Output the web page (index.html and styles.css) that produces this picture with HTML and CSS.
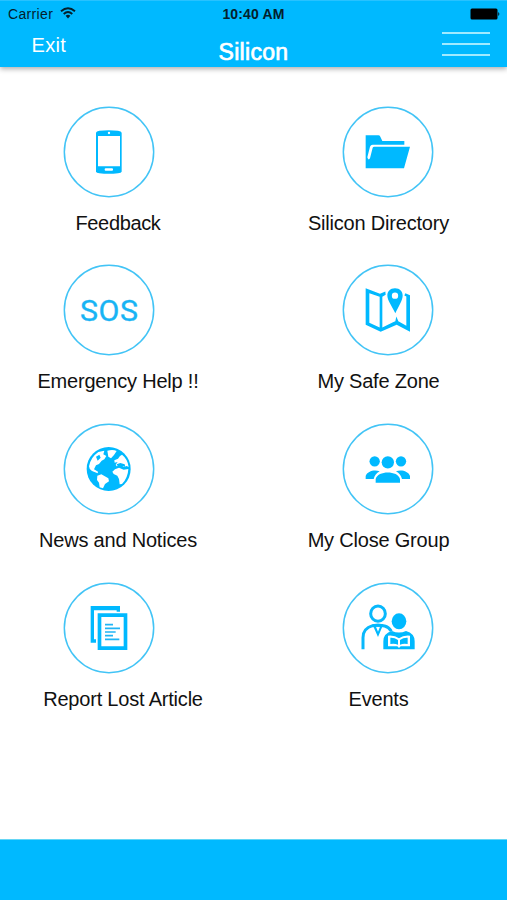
FILE: index.html
```html
<!DOCTYPE html>
<html lang="en">
<head>
<meta charset="utf-8">
<title>Silicon</title>
<link rel="stylesheet" href="styles.css">
</head>
<body>
<div class="app">
  <header class="header">
    <div class="status">
      <div class="carrier"><span>Carrier</span>
        <svg class="wifi" viewBox="0 0 16 12" fill="none" stroke="#04202c" stroke-width="1.9"><path d="M1 4.3Q8-1.8 15 4.3M3.7 7Q8 3.2 12.3 7"/><path d="M5.6 8.7Q8 6.8 10.4 8.7L8 11.4z" fill="#04202c" stroke="none"/></svg>
      </div>
      <div class="time">10:40 AM</div>
      <svg class="battery" viewBox="0 0 31 12"><rect x="0.5" y="0.5" width="27" height="11" rx="1.5"/><path d="M28.3 4q2 2 0 4z"/></svg>
    </div>
    <nav class="nav">
      <span class="exit">Exit</span>
      <h1 class="title">Silicon</h1>
      <div class="menu"><i></i><i></i><i></i></div>
    </nav>
  </header>
  <main class="grid">
    <div class="tile">
      <svg class="icon" viewBox="13 17 276 276"><circle class="ring" cx="151" cy="155" r="134"/>
        <path fill-rule="evenodd" d="M112 97Q113 93 122 91Q150 88 178 91Q188 93 189 97V214Q188 218 178 219Q150 222 122 219Q113 218 112 214zM118 107V198H184V107z"/><rect class="paper" x="138" y="204" width="25" height="7" rx="3"/><circle class="paper" cx="151" cy="98" r="3.5"/></svg>
      <span class="label feedback">Feedback</span>
    </div>
    <div class="tile">
      <svg class="icon" viewBox="13 17 276 276"><circle class="ring" cx="151" cy="155" r="134"/>
        <path d="M84 105H122Q126 105 128 109L134 122H200V133H105Q99 133 97 139L89 171Q92 182 97 174L105 142Q106 139 110 139H217L199 204H84z"/></svg>
      <span class="label directory">Silicon Directory</span>
    </div>
    <div class="tile">
      <svg class="icon" viewBox="13 13.5 276 276"><circle class="ring" cx="151" cy="151.5" r="134"/>
        <text class="sos" x="151" y="184" text-anchor="middle" textLength="174">SOS</text></svg>
      <span class="label emergency">Emergency Help !!</span>
    </div>
    <div class="tile">
      <svg class="icon" viewBox="13 13.5 276 276"><circle class="ring" cx="151" cy="151.5" r="134"/>
        <path fill-rule="evenodd" d="M84 86L127 103L143 96L144 106L134 112V204L166 188L173 185L176 171L182 185L206 199V111L200 108L203 101L217 107V217L177 196L129 217L84 196zM95 101V190L126 204V112z"/>
        <path fill-rule="evenodd" d="M172 86C157 86 149 96 149 108C149 122 162 139 173 161C184 139 195 122 195 108C195 96 187 86 172 86zM172 99A9.5 9.5 0 1 1 172 118A9.5 9.5 0 1 1 172 99z"/></svg>
      <span class="label zone">My Safe Zone</span>
    </div>
    <div class="tile">
      <svg class="icon" viewBox="13 10 276 276"><circle class="ring" cx="151" cy="148" r="134"/>
        <circle cx="150" cy="148" r="66"/>
        <path class="paper" d="M91 140Q96 113 119 97L137 93L134 104L143 109L137 119L129 123L121 133L112 137L106 149L118 156L117 161L100 154Q91 149 91 140z"/>
        <path class="paper" d="M146 93Q163 88 174 94L166 106L157 116L149 111zM116 168L128 164L149 176L151 185L139 193L133 206L123 203L121 189L115 181z"/>
        <path class="paper" d="M190 105Q207 118 210 142L204 139L196 142L188 137L174 140L171 135L177 127L168 129L167 122L178 117L184 109z"/>
        <path class="paper" d="M169 149L181 144L195 150L209 148Q208 174 190 193L183 194L181 178L176 168L165 163L161 156z"/>
        <path d="M112 111L122 105L126 114L117 123zM174 134L185 130L198 134L200 142L191 139L179 143z"/></svg>
      <span class="label news">News and Notices</span>
    </div>
    <div class="tile">
      <svg class="icon" viewBox="13 10 276 276"><circle class="ring" cx="151" cy="148" r="134"/>
        <circle cx="111" cy="125" r="15.5"/><circle cx="190" cy="125" r="15.5"/><circle cx="150.500" cy="128" r="18.500"/>
        <path d="M114 189V178C120 152 181 152 187 178V189zM84 178V169C89 154 111 149 126 155C116 160 111 168 108 178zM217 178V169C212 154 190 149 175 155C185 160 190 168 193 178z"/></svg>
      <span class="label group">My Close Group</span>
    </div>
    <div class="tile">
      <svg class="icon" viewBox="13 12 276 276"><circle class="ring" cx="151" cy="150" r="134"/>
        <path d="M96 84H184V101H174V97H106V184H112V194H96z"/><path fill-rule="evenodd" d="M117 106H206V216H117zM128 117V205H195V117z"/>
        <path fill="none" stroke="#20b5f5" stroke-width="5" d="M139 140H163M139 151H184M139 162H171M139 173H163M139 184H182"/></svg>
      <span class="label report">Report Lost Article</span>
    </div>
    <div class="tile">
      <svg class="icon" viewBox="13 12 276 276"><circle class="ring" cx="151" cy="150" r="134"/>
        <g fill="none" stroke="#08b8fc" stroke-width="9"><ellipse cx="121" cy="107" rx="22" ry="23"/><path d="M76 214V179Q76 151 105 143L121 141L141 144Q153 147 161 160"/></g>
        <path fill-rule="evenodd" d="M104 139H137L121 177zM115 146L121 161L127 146z"/>
        <ellipse cx="184" cy="130" rx="22" ry="24"/>
        <path d="M137 214V190Q137 166 163 159Q184 168 205 159Q231 166 231 190V214z"/>
        <path class="paper" d="M151 173Q171 171 184 181Q197 171 217 173V205H189L184 210L179 205H151z"/>
        <path d="M158 179Q170 178 181 186V200Q170 195 158 198zM210 179Q198 178 187 186V200Q198 195 210 198z"/></svg>
      <span class="label events">Events</span>
    </div>
  </main>
  <footer class="footer"></footer>
</div>
</body>
</html>
```
FILE: styles.css
```css
* { box-sizing: border-box; }
body { margin: 0; background: #fff; font-family: "Liberation Sans", Arial, sans-serif; }
.app { width: 507px; height: 900px; display: flex; flex-direction: column; overflow: hidden; }
.header { height: 67px; flex: none; background: #00b9ff; border-top: 1px solid #28c2ff; box-shadow: 0 2px 5px rgba(0, 0, 0, .32); }
.status { height: 26px; display: grid; grid-template-columns: 1fr auto 1fr; align-items: center; padding: 0 8px; color: #04202c; font-size: 14px; }
.carrier { display: flex; align-items: center; gap: 7px; letter-spacing: .35px; }
.wifi { width: 16px; height: 12px; margin-top: -2px; }
.time { font-weight: bold; letter-spacing: .15px; }
.battery { width: 31px; height: 12px; justify-self: end; margin-right: -2px; }
.nav { height: 40px; display: grid; grid-template-columns: 1fr auto 1fr; align-items: start; padding: 0 17px; color: #fff; }
.exit { font-size: 20px; line-height: 24px; margin: 6px 0 0 14.5px; letter-spacing: .3px; }
.title { margin: 12px 0 0; font-size: 23px; line-height: 26px; font-weight: normal; -webkit-text-stroke: .7px #fff; letter-spacing: .3px; }
.menu { display: flex; flex-direction: column; gap: 9px; width: 48px; justify-self: end; margin-top: 5px; }
.menu i { height: 2px; background: #9feaff; }
.grid { flex: 1; display: grid; grid-template-columns: 200px 200px; grid-auto-rows: 158.8px; column-gap: 60.5px; padding: 38.5px 0 0 18px; }
.tile { display: flex; flex-direction: column; align-items: center; }
.icon { width: 92px; height: 92px; flex: none; fill: #00b9ff; margin-right: 18px; }
.tile:nth-child(even) .icon { margin: 0 0 0 19px; }
.ring { fill: none; stroke: #42c4f6; stroke-width: 4.5; }
.paper { fill: #fff; }
.sos { font-family: Roboto, sans-serif; font-size: 91px; fill: #18b4f4; stroke: #18b4f4; stroke-width: 1; }
.label { margin-top: 13px; font-size: 20px; line-height: 24px; color: #111; white-space: nowrap; letter-spacing: -.2px; }
.feedback { letter-spacing: -.35px; }
.report { margin-left: 10px; }
.footer { height: 61px; flex: none; background: #00b9ff; border-top: 1px solid #65d6f5; }
```
